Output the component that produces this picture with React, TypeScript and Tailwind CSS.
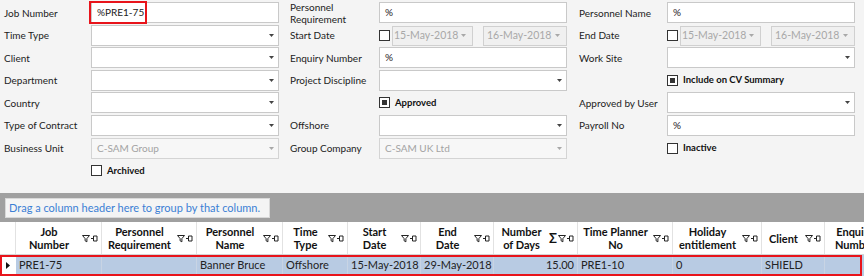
import React from "react";

const font = { fontFamily: 'Lato, "Liberation Sans", sans-serif' };

function Arrow({ muted = false }: { muted?: boolean }) {
  return (
    <svg width="5" height="3" viewBox="0 0 5 3" className="shrink-0">
      <path d="M0 0h5L2.5 3z" fill={muted ? "#a8a8a8" : "#444"} />
    </svg>
  );
}

function TextBox({ value = "", disabled = false, combo = false }: { value?: string; disabled?: boolean; combo?: boolean }) {
  return (
    <div
      className={`flex h-[21px] w-[188px] items-center justify-between whitespace-nowrap border pl-[5px] pr-[4px] text-[10px] ${
        disabled ? "border-[#d4d4d4] bg-[#f7f7f7] text-[#a3a3a3]" : "border-[#c9c9c9] bg-white text-[#222]"
      }`}
    >
      <span>{value}</span>
      {combo && <Arrow muted={disabled} />}
    </div>
  );
}

function Check({ checked = false, label }: { checked?: boolean; label?: string }) {
  return (
    <div className="flex items-center gap-[5px] whitespace-nowrap text-[9.5px]">
      <span className="flex h-[11px] w-[11px] items-center justify-center border border-[#333] bg-white">
        {checked && <span className="h-[5px] w-[5px] bg-[#333]" />}
      </span>
      {label && <span className="font-bold text-[#111]">{label}</span>}
    </div>
  );
}

function DateRange() {
  return (
    <div className="flex w-[188px] items-center">
      <span className="h-[11px] w-[11px] border border-[#333] bg-white" />
      <div className="ml-[2px] flex h-[20px] w-[81px] items-center justify-between whitespace-nowrap border border-[#d0d0d0] bg-[#f0f0f0] pl-[1px] pr-[6px] text-[10.5px] text-[#a8a8a8]">
        <span>15-May-2018</span>
        <Arrow muted />
      </div>
      <div className="ml-auto flex h-[20px] w-[84px] items-center justify-between whitespace-nowrap border border-[#d0d0d0] bg-[#f0f0f0] pl-[3px] pr-[6px] text-[10.5px] text-[#a8a8a8]">
        <span>16-May-2018</span>
        <Arrow muted />
      </div>
    </div>
  );
}

function Label({ children }: { children: React.ReactNode }) {
  return <div className="flex h-[21px] items-center whitespace-nowrap text-[10px] leading-[12px] text-[#1c1c1c]">{children}</div>;
}

function FilterPin() {
  return (
    <svg width="16" height="9" viewBox="0 0 16 9" className="shrink-0">
      <path d="M0.5 1.5h7L4.9 4.6v3.2L3.1 6.8V4.6z" fill="none" stroke="#222" strokeWidth="1" />
      <path d="M9 4.5h2.5M11.5 2v5M11.5 2h3.5v5h-3.5" fill="none" stroke="#222" strokeWidth="1" />
    </svg>
  );
}

const cols = [
  { w: 86, title: ["Job", "Number"], val: "PRE1-75" },
  { w: 95, title: ["Personnel", "Requirement"], val: "" },
  { w: 86, title: ["Personnel", "Name"], val: "Banner Bruce" },
  { w: 65, title: ["Time", "Type"], val: "Offshore" },
  { w: 73, title: ["Start", "Date"], val: "15-May-2018" },
  { w: 73, title: ["End", "Date"], val: "29-May-2018" },
  { w: 84, title: ["Number", "of Days"], val: "15.00", sum: true, right: true },
  { w: 95, title: ["Time Planner", "No"], val: "PRE1-10" },
  { w: 89, title: ["Holiday", "entitlement"], val: "0" },
  { w: 63, title: ["Client"], val: "SHIELD" },
  { w: 80, title: ["Enquiry", "Number"], val: "" },
];

export default function App() {
  return (
    <div className="h-[276px] w-[864px] overflow-hidden bg-[#f4f4f4]" style={font}>
      {/* filter form */}
      <div className="grid h-[193px] grid-cols-[87px_188px_11px_89px_188px_12px_88px_188px] auto-rows-[22.6px] pl-[4px] pt-[2px]">
        {/* row 1 */}
        <Label>Job Number</Label>
        <div className="relative">
          <TextBox value="%PRE1-75" />
          <div className="absolute left-[-2px] top-[-1px] h-[23px] w-[58px] border-2 border-[#e8141b]" />
        </div>
        <div />
        <Label>
          <span>
            Personnel
            <br />
            Requirement
          </span>
        </Label>
        <TextBox value="%" />
        <div />
        <Label>Personnel Name</Label>
        <TextBox value="%" />

        {/* row 2 */}
        <Label>Time Type</Label>
        <TextBox combo />
        <div />
        <Label>Start Date</Label>
        <DateRange />
        <div />
        <Label>End Date</Label>
        <DateRange />

        {/* row 3 */}
        <Label>Client</Label>
        <TextBox combo />
        <div />
        <Label>Enquiry Number</Label>
        <TextBox value="%" />
        <div />
        <Label>Work Site</Label>
        <TextBox combo />

        {/* row 4 */}
        <Label>Department</Label>
        <TextBox combo />
        <div />
        <Label>Project Discipline</Label>
        <TextBox combo />
        <div />
        <div />
        <div className="flex h-[21px] items-center">
          <Check checked label="Include on CV Summary" />
        </div>

        {/* row 5 */}
        <Label>Country</Label>
        <TextBox combo />
        <div />
        <div />
        <div className="flex h-[21px] items-center">
          <Check checked label="Approved" />
        </div>
        <div />
        <Label>Approved by User</Label>
        <TextBox combo />

        {/* row 6 */}
        <Label>Type of Contract</Label>
        <TextBox combo />
        <div />
        <Label>Offshore</Label>
        <TextBox combo />
        <div />
        <Label>Payroll No</Label>
        <TextBox value="%" />

        {/* row 7 */}
        <Label>Business Unit</Label>
        <TextBox value="C-SAM Group" disabled combo />
        <div />
        <Label>Group Company</Label>
        <TextBox value="C-SAM UK  Ltd" disabled combo />
        <div />
        <div />
        <div className="flex h-[21px] items-center">
          <Check label="Inactive" />
        </div>

        {/* row 8 */}
        <div />
        <div className="flex h-[21px] items-center">
          <Check label="Archived" />
        </div>
      </div>

      {/* group panel */}
      <div className="h-[29px] bg-[#a0a0a0] pl-[5px] pt-[5px]">
        <div className="flex h-[20px] w-[265px] items-center whitespace-nowrap border border-[#d8d8d8] bg-[#f4f4f4] pl-[3px] text-[11px] text-[#3b7fd4]">
          Drag a column header here to group by that column.
        </div>
      </div>

      {/* grid */}
      <div className="bg-white">
        <div className="flex h-[33px] border-b border-[#d6d6d6]">
          <div className="w-[16px] shrink-0 border-r border-[#e2e2e2]" />
          {cols.map((c, i) => (
            <div
              key={i}
              className="flex shrink-0 items-center overflow-hidden border-r border-[#e2e2e2] pr-[3px] text-[11px] font-bold leading-[13px] text-[#111]"
              style={{ width: c.w }}
            >
              <div className="flex-1 text-center">
                {c.title.map((t, j) => (
                  <div key={j} className="whitespace-nowrap">
                    {t}
                  </div>
                ))}
              </div>
              {c.sum && <span className="mr-px text-[13px] font-bold">Σ</span>}
              <FilterPin />
            </div>
          ))}
        </div>
        <div className="relative flex h-[21px] bg-[#b8cbe3]">
          <div className="flex w-[16px] shrink-0 items-center justify-center bg-white">
            <svg width="4" height="7" viewBox="0 0 4 7">
              <path d="M0 0l4 3.5L0 7z" fill="#111" />
            </svg>
          </div>
          {cols.map((c, i) => (
            <div
              key={i}
              className={`flex shrink-0 items-center whitespace-nowrap border-r border-[#c8d4e4] px-[3px] text-[11px] text-[#222] ${
                c.right ? "justify-end" : ""
              }`}
              style={{ width: c.w }}
            >
              {c.val}
            </div>
          ))}
          <div className="absolute inset-y-0 left-0 w-[862px] border-2 border-[#e8141b]" />
        </div>
      </div>
    </div>
  );
}
